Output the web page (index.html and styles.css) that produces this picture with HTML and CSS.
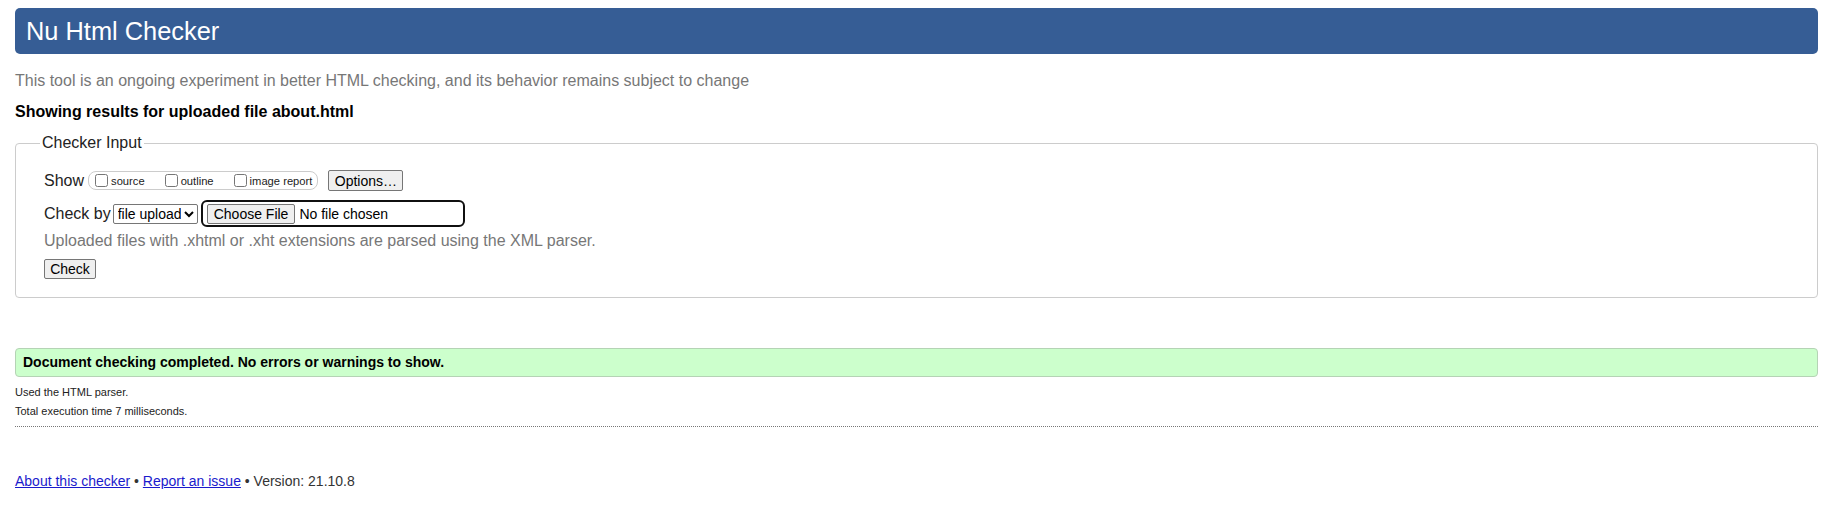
FILE: index.html
```html
<!DOCTYPE html>
<html lang="en">
<head>
<meta charset="utf-8">
<title>Nu Html Checker</title>
<link rel="stylesheet" href="styles.css">
</head>
<body>
<h1 class="title">Nu Html Checker</h1>
<p class="intro">This tool is an ongoing experiment in better HTML checking, and its behavior remains subject to change</p>
<p class="showing">Showing results for uploaded file about.html</p>
<form class="checker">
  <fieldset class="input-box">
    <legend class="input-legend">Checker Input</legend>
    <div class="row row-show">
      <span class="row-label">Show</span>
      <span class="show-options">
        <label class="opt"><input type="checkbox" class="cb">source</label>
        <label class="opt"><input type="checkbox" class="cb">outline</label>
        <label class="opt"><input type="checkbox" class="cb">image report</label>
      </span>
      <button type="button" class="btn btn-options">Options…</button>
    </div>
    <div class="row row-by">
      <span class="row-label">Check by</span>
      <select class="select"><option>file upload</option></select>
      <span class="file-input"><span class="btn btn-file">Choose File</span><span class="file-name">No file chosen</span></span>
    </div>
    <p class="hint">Uploaded files with .xhtml or .xht extensions are parsed using the XML parser.</p>
    <button type="button" class="btn btn-check">Check</button>
  </fieldset>
</form>
<p class="success">Document checking completed. No errors or warnings to show.</p>
<div class="details">
  <p class="detail">Used the HTML parser.</p>
  <p class="detail">Total execution time 7 milliseconds.</p>
</div>
<p class="footer"><a class="link" href="#">About this checker</a> • <a class="link" href="#">Report an issue</a> • Version: 21.10.8</p>
</body>
</html>
```
FILE: styles.css
```css
html, body {
  background: #fff;
}
body {
  margin: 0;
  padding: 8px 16px 0 15px;
  font-family: "Liberation Sans", Arial, sans-serif;
  color: #000;
}
.title {
  margin: 0;
  height: 46px;
  line-height: 46px;
  padding-left: 11px;
  background: #365d95;
  color: #fff;
  border-radius: 5px;
  font-size: 25.4px;
  font-weight: normal;
}
.intro {
  margin: 17px 0 0;
  font-size: 16px;
  line-height: 20px;
  color: #777;
}
.showing {
  margin: 11px 0 0;
  font-size: 16px;
  line-height: 20px;
  font-weight: bold;
}
.checker {
  margin: 11px 0 0;
}
.input-box {
  margin: 0;
  padding: 17px 16px 18px 28px;
  border: 1px solid #ccc;
  border-radius: 4px;
  min-width: 0;
}
.input-legend {
  margin-left: -4px;
  padding: 0 2px;
  font-size: 16px;
  line-height: 20px;
  color: #222;
}
.row {
  display: flex;
  align-items: center;
}
.row-show {
  height: 21px;
}
.row-label {
  font-size: 16px;
  line-height: 20px;
  color: #222;
}
.show-options {
  display: flex;
  align-items: center;
  height: 17px;
  margin-left: 4px;
  padding: 0 5px 0 2px;
  border: 1px solid #ccc;
  border-radius: 8px;
}
.opt {
  display: flex;
  align-items: center;
  font-size: 11.2px;
  color: #222;
}
.opt + .opt {
  margin-left: 16px;
}
.cb {
  width: 13px;
  height: 13px;
  margin: 0 3px 0 4px;
}
.btn {
  box-sizing: border-box;
  display: inline-flex;
  align-items: center;
  justify-content: center;
  white-space: nowrap;
  font-family: "Liberation Sans", Arial, sans-serif;
  font-size: 14px;
  color: #000;
  background: #efefef;
  border: 1px solid #767676;
  border-radius: 2px;
  padding: 0 6px;
}
.btn-options {
  margin-left: 10px;
  width: 75px;
  height: 21px;
}
.row-by {
  margin-top: 9px;
  height: 27px;
}
.select {
  box-sizing: border-box;
  margin-left: 2px;
  width: 85px;
  height: 20px;
  font-family: "Liberation Sans", Arial, sans-serif;
  font-size: 14px;
  padding: 0;
  color: #000;
  background: #fff;
  border: 1px solid #767676;
  border-radius: 2px;
}
.file-input {
  box-sizing: border-box;
  display: flex;
  align-items: center;
  margin-left: 3px;
  width: 264px;
  height: 27px;
  padding-left: 4px;
  border: 2px solid #101010;
  border-radius: 6px;
}
.btn-file {
  flex: none;
  height: 20px;
}
.file-name {
  margin-left: 4px;
  font-size: 14px;
  color: #000;
  white-space: nowrap;
}
.hint {
  margin: 4px 0 0;
  font-size: 16px;
  line-height: 20px;
  color: #777;
}
.btn-check {
  margin-top: 8px;
  width: 52px;
  height: 20px;
}
.success {
  margin: 50px 0 0;
  height: 27px;
  line-height: 27px;
  padding: 0 7px;
  background: #ccffcc;
  border: 1px solid #b5d3b5;
  border-radius: 4px;
  font-size: 14px;
  font-weight: bold;
  color: #000;
}
.details {
  margin-top: 6px;
  padding-bottom: 5px;
  border-bottom: 1px dotted #777;
}
.detail {
  margin: 0;
  font-size: 11px;
  line-height: 19px;
  color: #222;
}
.footer {
  margin: 45px 0 0;
  font-size: 14px;
  line-height: 18px;
  color: #333;
}
.link {
  color: #1a1acc;
}
```
